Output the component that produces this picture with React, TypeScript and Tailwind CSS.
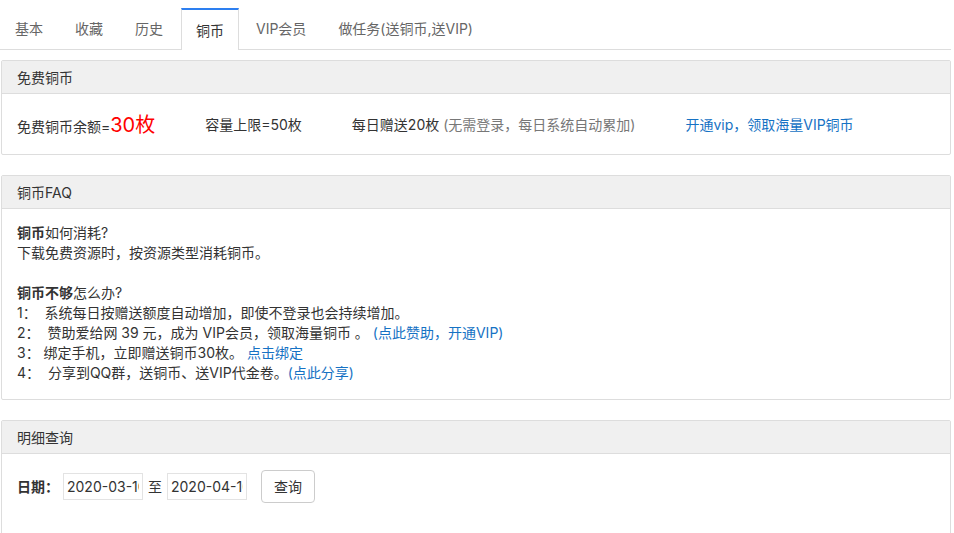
import React from "react"

const tabs = ["基本", "收藏", "历史", "铜币", "VIP会员", "做任务(送铜币,送VIP)"]

function Panel({ title, children, bodyClass }: { title: string; children: React.ReactNode; bodyClass?: string }) {
  return (
    <section className="border border-[#dddddd] rounded-[2px] bg-white mb-5">
      <div className="bg-[#f0f0f0] border-b border-[#dddddd] px-[15px] h-[33px] flex items-center text-[14px] text-[#333]">
        {title}
      </div>
      <div className={bodyClass}>{children}</div>
    </section>
  )
}

export default function App() {
  return (
    <div className="w-[951px] pt-2 text-[14px] text-[#333] font-['Inter','Noto_Sans_CJK_SC',sans-serif]">
      {/* <--- tabs ---> */}
      <ul className="flex border-b border-[#dddddd] h-[42px]">
        {tabs.map((t, i) =>
          i === 3 ? (
            <li
              key={t}
              className="mr-[2px] ml-[1px] -mb-px px-[14px] h-[42px] flex items-center bg-white border-x border-[#dddddd] border-t-2 border-t-[#2d7ff0] text-[#333]">
              {t}
            </li>
          ) : (
            <li key={t} className="mr-[2px] px-[15px] h-[41px] flex items-center text-[#666]">
              {t}
            </li>
          )
        )}
      </ul>

      <div className="pt-[10px] pl-px">
        {/* <--- free coins ---> */}
        <Panel title="免费铜币" bodyClass="px-[15px] pt-px h-[60px] flex items-center">
          <span>
            免费铜币余额=<span className="text-[#ff0000] text-[20px]">30枚</span>
          </span>
          <span className="ml-[50px]">容量上限=50枚</span>
          <span className="ml-[50px]">
            每日赠送20枚 <span className="text-[#777]">(无需登录，每日系统自动累加)</span>
          </span>
          <a className="ml-[50px] text-[#1672c4]" href="#">
            开通vip，领取海量VIP铜币
          </a>
        </Panel>

        {/* <--- FAQ ---> */}
        <Panel title="铜币FAQ" bodyClass="px-[15px] pt-[14px] pb-[16px] leading-[20px]">
          <p>
            <b>铜币</b>如何消耗?
          </p>
          <p>下载免费资源时，按资源类型消耗铜币。</p>
          <p>&nbsp;</p>
          <p>
            <b>铜币不够</b>怎么办?
          </p>
          <p>1：&nbsp;&nbsp;系统每日按赠送额度自动增加，即使不登录也会持续增加。</p>
          <p>
            2：&nbsp;&nbsp;赞助爱给网 39 元，成为 VIP会员，领取海量铜币 。
            <a className="ml-1 text-[#1672c4]" href="#">
              (点此赞助，开通VIP)
            </a>
          </p>
          <p>
            3：&nbsp;绑定手机，立即赠送铜币30枚。{" "}
            <a className="text-[#1672c4]" href="#">
              点击绑定
            </a>
          </p>
          <p>
            4：&nbsp;&nbsp;分享到QQ群，送铜币、送VIP代金卷。
            <a className="text-[#1672c4]" href="#">
              (点此分享)
            </a>
          </p>
        </Panel>

        {/* <--- detail query ---> */}
        <Panel title="明细查询" bodyClass="px-[15px] pt-4 h-[90px]">
          <div className="flex items-center">
            <b className="mr-1">日期：</b>
            <input
              className="w-[80px] h-[27px] border border-[#e3e3e3] px-[3px] text-[14px] text-[#333] outline-none"
              defaultValue="2020-03-10"
            />
            <span className="mx-[5px]">至</span>
            <input
              className="w-[80px] h-[27px] border border-[#e3e3e3] px-[3px] text-[14px] text-[#333] outline-none"
              defaultValue="2020-04-10"
            />
            <button className="ml-[14px] w-[54px] h-[33px] border border-[#cccccc] rounded-[4px] bg-white text-[#333]">
              查询
            </button>
          </div>
        </Panel>
      </div>
    </div>
  )
}
